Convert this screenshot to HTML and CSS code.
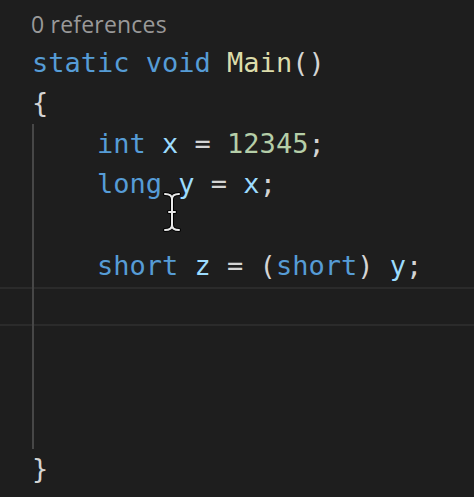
FILE: index.html
```html
<!DOCTYPE html>
<html>
<head>
<meta charset="utf-8">
<link rel="stylesheet" href="styles.css">
</head>
<body>
<div class="editor">
  <div class="lens">0 references</div>
  <div class="line"><span class="kw">static</span> <span class="kw">void</span> <span class="fn">Main</span><span class="p">()</span></div>
  <div class="line"><span class="p">{</span></div>
  <div class="block">
    <div class="line ind"><span class="kw">int</span> <span class="var">x</span> <span class="p">=</span> <span class="num">12345</span><span class="p">;</span></div>
    <div class="line ind"><span class="kw">long</span> <span class="var">y</span> <span class="p">=</span> <span class="var">x</span><span class="p">;</span></div>
    <div class="line ind"></div>
    <div class="line ind"><span class="kw">short</span> <span class="var">z</span> <span class="p">=</span> <span class="p">(</span><span class="kw">short</span><span class="p">)</span> <span class="var">y</span><span class="p">;</span></div>
    <div class="line ind"></div>
    <div class="line ind"></div>
    <div class="line ind"></div>
    <div class="line ind"></div>
    <div class="current"></div>
    <div class="guide"></div>
  </div>
  <div class="line"><span class="p">}</span></div>
  <svg class="ibeam" width="18" height="40" viewBox="0 0 18 40">
    <path d="M2 2 Q9 2 9 7 Q9 2 16 2 M9 7 V33 Q9 38 2 38 M9 33 Q9 38 16 38 M6 20 H12" fill="none" stroke="#000" stroke-width="4" stroke-linecap="round"/>
    <path d="M2 2 Q9 2 9 7 Q9 2 16 2 M9 7 V33 Q9 38 2 38 M9 33 Q9 38 16 38 M6 20 H12" fill="none" stroke="#e8e8e8" stroke-width="2" stroke-linecap="round"/>
  </svg>
</div>
</body>
</html>
```

FILE: styles.css
```css
html, body {
  margin: 0;
  padding: 0;
  background: #1e1e1e;
}
.editor {
  position: relative;
  width: 474px;
  height: 497px;
  overflow: hidden;
  background: #1e1e1e;
}
.lens {
  height: 42.7px;
  box-sizing: border-box;
  padding-left: 31px;
  padding-top: 8px;
  font-family: "Open Sans", "Noto Sans", sans-serif;
  font-size: 23px;
  line-height: 32px;
  color: #999999;
  letter-spacing: 0.2px;
}
.line {
  height: 40.6px;
  line-height: 40.6px;
  padding-left: 32px;
  font-family: "DejaVu Sans Mono", monospace;
  font-size: 27px;
  white-space: pre;
  color: #d4d4d4;
  position: relative;
  z-index: 1;
}
.line.ind {
  padding-left: 97px;
}
.block {
  position: relative;
}
.current {
  position: absolute;
  left: 0;
  right: 0;
  top: 163px;
  height: 39px;
  border-top: 2px solid #2b2b2b;
  border-bottom: 2px solid #2b2b2b;
  box-sizing: border-box;
}
.guide {
  position: absolute;
  left: 32px;
  top: 0;
  bottom: 0;
  width: 2px;
  background: #474747;
}
.kw { color: #569cd6; }
.fn { color: #dcdcaa; }
.num { color: #b5cea8; }
.var { color: #9cdcfe; }
.p { color: #d4d4d4; }
.ibeam {
  position: absolute;
  left: 163px;
  top: 192px;
  z-index: 2;
}
```
